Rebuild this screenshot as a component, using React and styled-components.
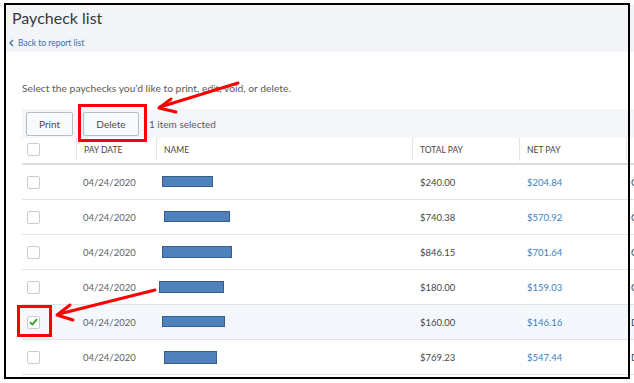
import styled, { createGlobalStyle } from 'styled-components'

const GlobalStyle = createGlobalStyle`
  body {
    margin: 0;
    background: #fff;
    font-family: Lato, "Open Sans", sans-serif;
  }
`;

const COLS = '54px 80px 256px 107px 107px 1fr';

const Page = styled.div`
  position: relative;
  width: 634px;
  height: 383px;
  overflow: hidden;
  background: #fff;
`;

const Content = styled.div`
  padding: 4px 0 0 4px;
`;

const Header = styled.div`
  background: #f3f4f8;
  height: 48px;
  padding: 4px 0 0 8px;
  box-sizing: border-box;
`;

const Title = styled.h1`
  margin: 0;
  font-size: 16px;
  line-height: 20px;
  font-weight: 400;
  color: #393a3d;
`;

const BackLink = styled.a`
  display: flex;
  align-items: center;
  gap: 4px;
  margin: 9px 0 0 -3px;
  font-size: 8.5px;
  line-height: 12px;
  color: #3a6fb0;
`;

const Body = styled.div`
  padding-left: 18px;
`;

const Intro = styled.p`
  margin: 29px 0 0;
  font-size: 10.3px;
  line-height: 14px;
  color: #5a5b5e;
`;

const Toolbar = styled.div`
  display: flex;
  align-items: center;
  gap: 10px;
  margin-top: 14px;
  height: 29px;
  padding-left: 4px;
  background: #f4f6f9;
`;

const Button = styled.button`
  height: 24px;
  width: ${({ w }) => w}px;
  border: 1px solid #b9bcc1;
  border-radius: 2px;
  background: #f9fafb;
  font-family: inherit;
  font-size: 10px;
  color: #4a4b4f;
  padding: 0;
`;

const Selected = styled.span`
  font-size: 10px;
  color: #5a5b5e;
`;

const HeadRow = styled.div`
  display: grid;
  grid-template-columns: ${COLS};
  height: 25px;
  border-bottom: 2px solid #d9dce0;
`;

const HeadCell = styled.div`
  display: flex;
  align-items: center;
  padding-left: ${({ first }) => (first ? 5 : 7)}px;
  border-left: ${({ first }) => (first ? 'none' : '1px solid #e3e5e8')};
  margin-bottom: 2px;
  font-size: 8.5px;
  color: #45464a;
  white-space: nowrap;
`;

const Row = styled.div`
  display: grid;
  grid-template-columns: ${COLS};
  height: 34px;
  border-bottom: 1px solid #e0e2e5;
  background: ${({ active }) => (active ? '#f4f8fd' : '#fff')};
`;

const Cell = styled.div`
  display: flex;
  align-items: center;
  padding-left: ${({ pad }) => pad ?? 8}px;
  font-size: 9.5px;
  color: ${({ tone }) => tone || '#45464a'};
  white-space: nowrap;
`;

const Box = styled.span`
  display: flex;
  align-items: center;
  justify-content: center;
  width: 13px;
  height: 13px;
  box-sizing: border-box;
  border: 1px solid #c9ccd0;
  border-radius: 2px;
  background: #fff;
`;

const Redact = styled.span`
  display: block;
  width: ${({ w }) => w}px;
  height: ${({ h }) => h}px;
  margin-left: ${({ x }) => x}px;
  margin-top: ${({ dy }) => dy}px;
  background: #4f81bd;
  border: 1px solid #385d8a;
  box-sizing: border-box;
`;

const Frame = styled.div`
  position: absolute;
  left: 4px;
  top: 3px;
  width: 626px;
  height: 376px;
  box-sizing: border-box;
  border: 2px solid #000;
  pointer-events: none;
`;

const RedBox = styled.div`
  position: absolute;
  left: ${({ x }) => x}px;
  top: ${({ y }) => y}px;
  width: ${({ w }) => w}px;
  height: ${({ h }) => h}px;
  box-sizing: border-box;
  border: 3px solid #f00;
`;

const Arrows = styled.svg`
  position: absolute;
  left: 0;
  top: 0;
`;

const rows = [
  { x: 2, w: 51, h: 11, dy: -1, total: '$240.00', net: '$204.84', method: 'Check' },
  { x: 4, w: 66, h: 11, dy: -1, total: '$740.38', net: '$570.92', method: 'Check' },
  { x: 2, w: 70, h: 12, dy: -1, total: '$846.15', net: '$701.64', method: 'Check' },
  { x: -1, w: 65, h: 12, dy: 0, total: '$180.00', net: '$159.03', method: 'Check' },
  { x: 2, w: 63, h: 11, dy: -1, total: '$160.00', net: '$146.16', method: 'Direct deposit', active: true },
  { x: 4, w: 53, h: 13, dy: 0, total: '$769.23', net: '$547.44', method: 'Direct deposit' },
];

const Check = () => (
  <svg width="9" height="8" viewBox="0 0 9 8">
    <path d="M1 4.2 L3.4 6.5 L8 1.2" fill="none" stroke="#2ca01c" strokeWidth="1.8" />
  </svg>
);

const App = () => {
  return (
    <Page>
      <GlobalStyle />
      <Content>
        <Header>
          <Title>Paycheck list</Title>
          <BackLink>
            <svg width="5" height="8" viewBox="0 0 5 8">
              <path d="M4 1 L1 4 L4 7" fill="none" stroke="#3a6fb0" strokeWidth="1.3" />
            </svg>
            Back to report list
          </BackLink>
        </Header>
        <Body>
          <Intro>Select the paychecks you’d like to print, edit, void, or delete.</Intro>
          <Toolbar>
            <Button w={47}>Print</Button>
            <Button w={56}>Delete</Button>
            <Selected>1 item selected</Selected>
          </Toolbar>
          <HeadRow>
            <HeadCell first><Box /></HeadCell>
            <HeadCell>PAY DATE</HeadCell>
            <HeadCell>NAME</HeadCell>
            <HeadCell>TOTAL PAY</HeadCell>
            <HeadCell>NET PAY</HeadCell>
            <HeadCell>PAY METHOD</HeadCell>
          </HeadRow>
          {rows.map((r, i) => (
            <Row key={i} active={r.active}>
              <Cell pad={5}><Box>{r.active && <Check />}</Box></Cell>
              <Cell pad={7} tone="#5d5e63">04/24/2020</Cell>
              <Cell pad={4}><Redact x={r.x} w={r.w} h={r.h} dy={r.dy} /></Cell>
              <Cell>{r.total}</Cell>
              <Cell tone="#3c7fc1">{r.net}</Cell>
              <Cell pad={5}>{r.method}</Cell>
            </Row>
          ))}
        </Body>
      </Content>
      <Frame />
      <RedBox x={78} y={104} w={69} h={38} />
      <RedBox x={17} y={305} w={35} h={32} />
      <Arrows width="634" height="383">
        <g fill="none" stroke="#f00" strokeWidth="3" strokeLinecap="round" strokeLinejoin="round">
          <line x1="238" y1="83" x2="160" y2="107" />
          <polyline points="171,99 159,108 176,112" />
          <line x1="155" y1="290" x2="59" y2="314" />
          <polyline points="70,305 57,315 73,320" />
        </g>
      </Arrows>
    </Page>
  );
};

export default App;
